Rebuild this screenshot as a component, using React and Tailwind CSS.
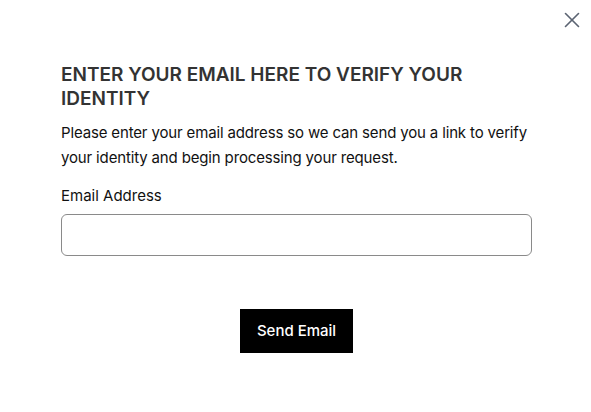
import { X } from "lucide-react";

export default function App() {
  return (
    <div
      className="relative min-h-[412px] w-full bg-white text-[#222]"
      style={{ fontFamily: "Inter, 'Liberation Sans', sans-serif" }}
    >
      <button className="absolute right-[6px] top-[7px] text-[#5b6472]">
        <X size={26} strokeWidth={1.5} />
      </button>

      <div className="flex flex-col pl-[61px] pr-[59px] pt-[63px]">
        <h2 className="text-[19px] font-semibold leading-[24px] text-[#333]">
          ENTER YOUR EMAIL HERE TO VERIFY YOUR IDENTITY
        </h2>
        <p className="mt-[9px] text-[15px] leading-[25px] tracking-[-0.15px] text-[#111]">
          Please enter your email address so we can send you a link to verify
          your identity and begin processing your request.
        </p>

        <label className="mt-[16px] text-[15px] leading-[20px] text-[#111]">
          Email Address
        </label>
        <input
          type="email"
          className="mt-[8px] h-[42px] w-full rounded-[6px] border border-[#8a8a8a] px-3 text-[15px] outline-none"
        />

        <div className="mt-[53px] flex justify-center">
          <button className="h-[44px] w-[113px] bg-black text-[15px] font-medium text-white">
            Send Email
          </button>
        </div>
      </div>
    </div>
  );
}
